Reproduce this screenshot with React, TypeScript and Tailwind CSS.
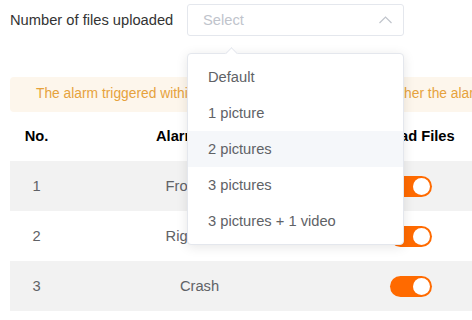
import React from "react";

const rows = [
  { no: 1, type: "Front Side", bg: "bg-[#f2f2f2]" },
  { no: 2, type: "Right Side", bg: "bg-white" },
  { no: 3, type: "Crash", bg: "bg-[#f2f2f2]" },
];

const options = ["Default", "1 picture", "2 pictures", "3 pictures", "3 pictures + 1 video"];

function Toggle() {
  return (
    <div className="w-[42px] h-[21px] rounded-full bg-[#ff6a00] flex items-center justify-end pr-[2px]">
      <div className="w-[17px] h-[17px] rounded-full bg-white" />
    </div>
  );
}

export default function App() {
  return (
    <div
      className="relative w-[472px] h-[320px] overflow-hidden bg-white text-[14.7px]"
      style={{ fontFamily: '"Liberation Sans", Arial, sans-serif' }}
    >
      <div className="flex items-center pt-[4px] pl-[10px]">
        <div className="w-[177px] text-[#333333] leading-none">Number of files uploaded</div>
        <div className="w-[217px] h-[32px] border border-[#e4e7ed] rounded-[3px] flex items-center justify-between pl-[15px] pr-[11px]">
          <span className="text-[#c0c4cc]">Select</span>
          <svg width="13" height="8" viewBox="0 0 13 8" fill="none">
            <polyline points="0.5,7 6.5,1 12.5,7" stroke="#c0c4cc" strokeWidth="1.2" />
          </svg>
        </div>
      </div>

      <div className="ml-[10px] mt-[41px] w-[700px] h-[35px] bg-[#fdf6ec] rounded-[4px] flex items-center pl-[26px] text-[13.8px] text-[#e6a23c] whitespace-nowrap">
        The alarm triggered within the set time will upload files, whether the alarm is manual or automatic
      </div>

      <div className="ml-[10px] w-[476px]">
        <div className="flex h-[49px] items-center font-bold text-black">
          <div className="w-[53px] text-center">No.</div>
          <div className="w-[273px] text-center">Alarm Types</div>
          <div className="w-[150px] text-center">Upload Files</div>
        </div>
        {rows.map((r) => (
          <div key={r.no} className={`flex h-[50px] items-center text-[#606266] ${r.bg}`}>
            <div className="w-[53px] text-center">{r.no}</div>
            <div className="w-[273px] text-center">{r.type}</div>
            <div className="w-[150px] flex justify-center">
              <Toggle />
            </div>
          </div>
        ))}
      </div>

      <div className="absolute left-[187px] top-[53px] w-[217px] bg-white border border-[#e4e7ed] rounded-[4px] shadow-[0_2px_12px_0_rgba(0,0,0,0.1)] py-[5px] z-10">
        <div className="absolute -top-[5px] left-[39px] w-[9px] h-[9px] bg-white border-l border-t border-[#e4e7ed] rotate-45" />
        {options.map((o, i) => (
          <div
            key={o}
            className={`h-[36px] flex items-center pl-[20px] text-[#606266] ${i === 2 ? "bg-[#f5f7fa]" : ""}`}
          >
            {o}
          </div>
        ))}
      </div>
    </div>
  );
}
